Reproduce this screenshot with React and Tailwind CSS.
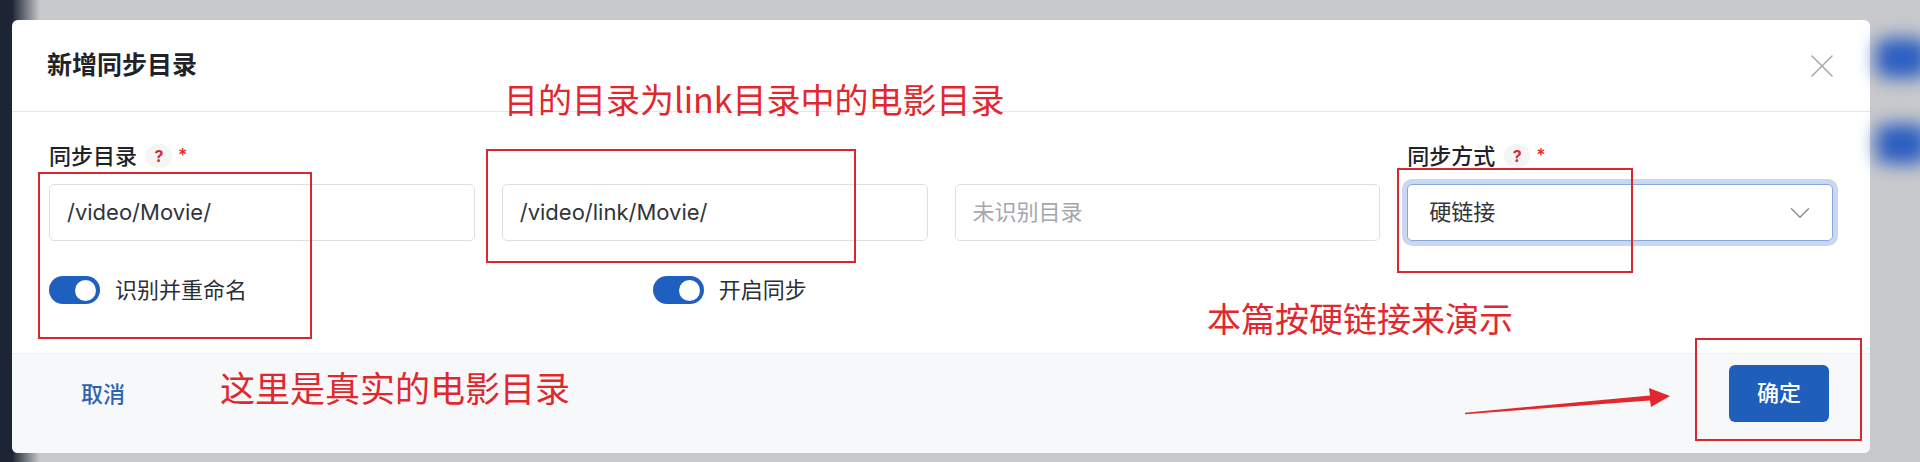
import { ChevronDown, X } from 'lucide-react';

function Toggle({ label }) {
    return (
        <div className="flex items-center gap-[15px] h-[30px]">
            <span className="w-[51px] h-[28px] rounded-full bg-[#1f5fbf] flex items-center justify-end pr-[4px]">
                <span className="w-[21px] h-[21px] rounded-full bg-white"></span>
            </span>
            <span className="text-[22px] text-[#2b2f36] leading-[30px]">{label}</span>
        </div>
    );
}

function Label({ text }) {
    return (
        <div className="h-[30px] flex items-center text-[22px] font-medium text-[#1f2329] leading-[30px]">
            {text && (
                <>
                    <span>{text}</span>
                    <span className="ml-[9px] w-[26px] h-[24px] rounded-full bg-[#f5f5f6] flex items-center justify-center text-[16px] font-bold text-[#d92d2d]">?</span>
                    <span className="ml-[6px] text-[18px] text-[#d92d2d]">*</span>
                </>
            )}
        </div>
    );
}

function TextInput({ value, placeholder }) {
    return (
        <div className="h-[57px] rounded-[5px] border border-[#dcdfe4] bg-white flex items-center px-[17px] text-[22px]">
            {value ? <span className="text-[#30343b]">{value}</span> : <span className="text-[#a4a7ad]">{placeholder}</span>}
        </div>
    );
}

export default function App() {
    return (
        <div className="relative w-[1920px] h-[462px] overflow-hidden flex bg-[linear-gradient(to_right,#1d2535_12px,#c8c9cc_40px)] font-['Inter','Noto_Sans_CJK_SC',sans-serif]">
            {/* Modal */}
            <div className="shrink-0 ml-[12px] mt-[20px] w-[1858px] h-[433px] rounded-[6px] bg-white overflow-hidden flex flex-col">
                <div className="h-[92px] shrink-0 border-b border-[#e6e7ea] flex items-center justify-between pl-[35px] pr-[28px]">
                    <span className="text-[25px] font-semibold text-[#1f2329]">新增同步目录</span>
                    <X className="w-[40px] h-[40px] text-[#a3a6ab]" strokeWidth={0.9} />
                </div>

                <div className="flex-1 px-[37px] pt-[29px]">
                    <div className="grid grid-cols-4 gap-x-[27px]">
                        <div className="flex flex-col gap-[13px]">
                            <Label text="同步目录" />
                            <TextInput value="/video/Movie/" />
                        </div>
                        <div className="flex flex-col gap-[13px]">
                            <Label />
                            <TextInput value="/video/link/Movie/" />
                        </div>
                        <div className="flex flex-col gap-[13px]">
                            <Label />
                            <TextInput placeholder="未识别目录" />
                        </div>
                        <div className="flex flex-col gap-[13px]">
                            <Label text="同步方式" />
                            <div className="h-[57px] rounded-[5px] border border-[#86a8dd] ring-[5px] ring-[#c9d8f0] bg-white flex items-center justify-between pl-[21px] pr-[15px] text-[22px] text-[#30343b]">
                                <span>硬链接</span>
                                <ChevronDown className="w-[34px] h-[34px] text-[#8a8d92]" strokeWidth={1} />
                            </div>
                        </div>
                    </div>
                    <div className="grid grid-cols-3 gap-x-[27px] mt-[34px]">
                        <Toggle label="识别并重命名" />
                        <Toggle label="开启同步" />
                        <div></div>
                    </div>
                </div>

                <div className="h-[100px] shrink-0 border-t border-[#eceef1] bg-[#f7f8fa] flex items-start justify-between pt-[11px] pl-[69px] pr-[41px]">
                    <span className="mt-[14px] text-[22px] leading-[30px] font-medium text-[#2d62b3]">取消</span>
                    <button className="w-[100px] h-[57px] rounded-[6px] bg-[#1f5ebb] text-white text-[22px] font-medium">确定</button>
                </div>
            </div>

            {/* Blurred page behind the modal */}
            <div className="flex-1 flex flex-col pt-[38px] pl-[6px]">
                <div className="w-[52px] h-[40px] shrink-0 rounded-[10px] bg-[#2c5fc0] blur-[9px]"></div>
                <div className="w-[52px] h-[40px] shrink-0 rounded-[10px] bg-[#2c5fc0] blur-[9px] mt-[46px]"></div>
            </div>

            {/* Red annotations */}
            <div className="absolute left-[38px] top-[172px] w-[274px] h-[167px] border-2 border-[#d42a2f]"></div>
            <div className="absolute left-[486px] top-[149px] w-[370px] h-[114px] border-2 border-[#d42a2f]"></div>
            <div className="absolute left-[1397px] top-[168px] w-[236px] h-[105px] border-2 border-[#d42a2f]"></div>
            <div className="absolute left-[1695px] top-[338px] w-[167px] h-[103px] border-2 border-[#d42a2f]"></div>

            <span className="absolute left-[504px] top-[82px] text-[34px] leading-none text-[#e0282e] font-['Noto_Sans_CJK_SC',sans-serif]">目的目录为link目录中的电影目录</span>
            <span className="absolute left-[1207px] top-[301px] text-[34px] leading-none text-[#e0282e] font-['Noto_Sans_CJK_SC',sans-serif]">本篇按硬链接来演示</span>
            <span className="absolute left-[220px] top-[369px] text-[35px] leading-none text-[#e0282e] font-['Noto_Sans_CJK_SC',sans-serif]">这里是真实的电影目录</span>

            <svg className="absolute left-0 top-0" width="1920" height="462" viewBox="0 0 1920 462">
                <polygon points="1465,412.8 1650,395.5 1649,388 1670,396 1651,407 1650,400.5 1465,414.2" fill="#e0282e" />
            </svg>
        </div>
    );
}
